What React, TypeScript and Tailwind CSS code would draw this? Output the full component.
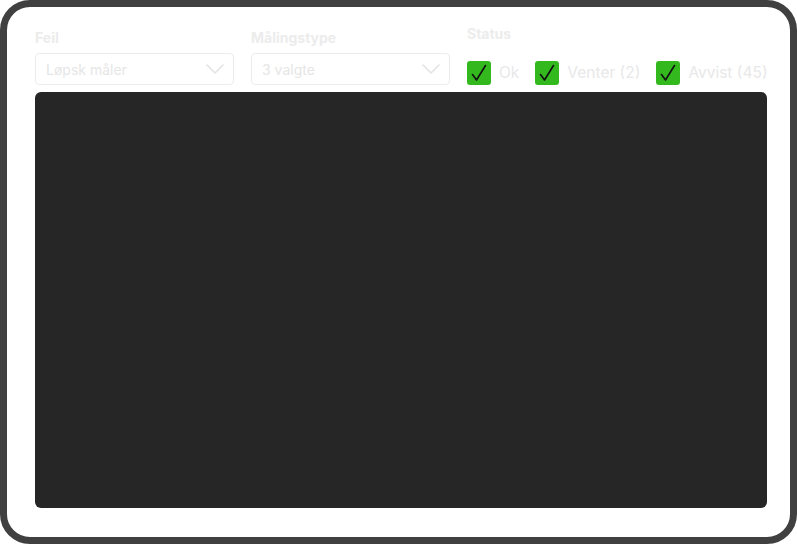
function Chevron() {
  return (
    <svg width="18" height="10" viewBox="0 0 18 10" fill="none" className="shrink-0">
      <path d="M1 1L9 9L17 1" stroke="#e3e3e3" strokeWidth="1.6" strokeLinecap="round" strokeLinejoin="round" />
    </svg>
  )
}

function SelectField({ label, value }: { label: string; value: string }) {
  return (
    <div className="flex w-[199px] shrink-0 flex-col pt-[4px]">
      <p className="h-[20px] text-[14px] leading-[20px] font-bold text-[#ececec]">{label}</p>
      <div className="mt-[5px] flex h-[32px] items-center justify-between rounded-[4px] border border-[#ececec] pl-[10px] pr-[9px]">
        <span className="text-[14px] text-[#e6e6e6]">{value}</span>
        <Chevron />
      </div>
    </div>
  )
}

function StatusBox({ label }: { label: string }) {
  return (
    <div className="flex shrink-0 items-center gap-[8px] whitespace-nowrap">
      <div className="flex h-[24px] w-[24px] items-center justify-center rounded-[3px] bg-[#33b81e]">
        <svg width="24" height="24" viewBox="0 0 24 24" fill="none">
          <path d="M5.5 13.5L9.5 19L18.5 4.5" stroke="#111" strokeWidth="1.6" strokeLinecap="round" strokeLinejoin="round" />
        </svg>
      </div>
      <span className="text-[15.5px] text-[#e8e8e8]">{label}</span>
    </div>
  )
}

const STATUSES = ['Ok', 'Venter (2)', 'Avvist (45)']

export default function App() {
  return (
    <div className="h-[544px] w-[797px] bg-white" style={{ fontFamily: 'Inter, "Noto Sans", sans-serif' }}>
      <div className="flex h-full w-full flex-col rounded-[30px] border-[7px] border-[#404040] pt-[17px] pr-[23px] pb-[29px] pl-[28px]">
        <div className="flex items-start gap-[17px]">
          <SelectField label="Feil" value="Løpsk måler" />
          <SelectField label="Målingstype" value="3 valgte" />
          <div className="flex min-w-0 flex-1 flex-col">
            <p className="h-[20px] text-[14px] leading-[20px] font-bold text-[#ececec]">Status</p>
            <div className="mt-[17px] flex items-center gap-[16px]">
              {STATUSES.map((s) => (
                <StatusBox key={s} label={s} />
              ))}
            </div>
          </div>
        </div>
        <div className="mt-[7px] flex-1 rounded-[6px] bg-[#262626]" />
      </div>
    </div>
  )
}
